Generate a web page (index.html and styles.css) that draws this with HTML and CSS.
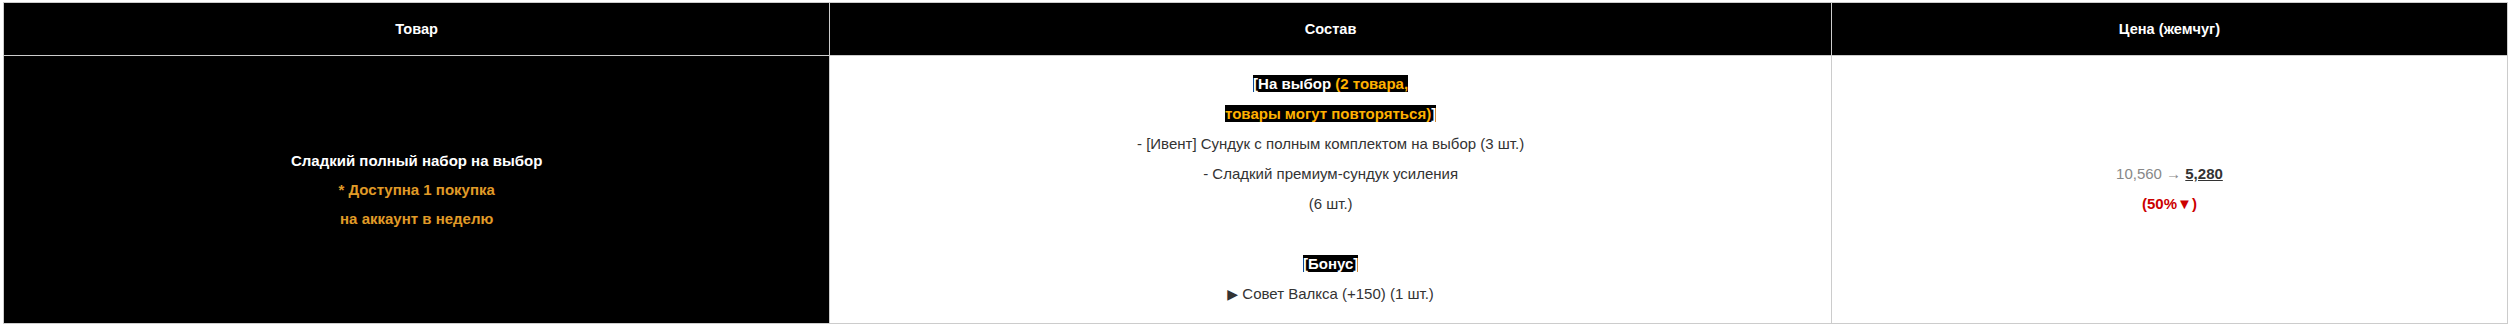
FILE: index.html
```html
<!DOCTYPE html>
<html lang="ru">
<head>
<meta charset="utf-8">
<title>Товар</title>
<link rel="stylesheet" href="styles.css">
</head>
<body>
<div class="wrap">
<table class="shop">
  <colgroup>
    <col class="c-item">
    <col class="c-comp">
    <col class="c-price">
  </colgroup>
  <thead>
    <tr>
      <th>Товар</th>
      <th>Состав</th>
      <th>Цена (жемчуг)</th>
    </tr>
  </thead>
  <tbody>
    <tr>
      <td class="item">Сладкий полный набор на выбор<br><span class="note">* Доступна 1 покупка<br>на аккаунт в неделю</span></td>
      <td class="comp"><span class="tag">[На выбор <span class="hl">(2 товара,<br>товары могут повторяться)</span>]</span><br>- [Ивент] Сундук с полным комплектом на выбор (3 шт.)<br>- Сладкий премиум-сундук усиления<br>(6 шт.)<br><br><span class="tag">[Бонус]</span><br><span class="glyph">▶</span> Совет Валкса (+150) (1 шт.)</td>
      <td class="price"><span class="old">10,560 →</span> <span class="new">5,280</span><br><span class="off">(50%<span class="down">▼</span>)</span></td>
    </tr>
  </tbody>
</table>
</div>
</body>
</html>
```

FILE: styles.css
```css
html, body {
  margin: 0;
  padding: 0;
  background: #ffffff;
}

.wrap {
  padding: 2px 3px 3px 3px;
}

.shop {
  width: 100%;
  border-collapse: collapse;
  border: 1px solid #cccccc;
  font-family: "Liberation Sans", Arial, sans-serif;
  font-size: 15px;
  line-height: 30px;
  color: #333333;
  table-layout: fixed;
}

.c-item { width: 33%; }
.c-comp { width: 40%; }
.c-price { width: 27%; }

.shop th {
  background: #000000;
  color: #ffffff;
  font-weight: bold;
  font-size: 14.6px;
  text-align: center;
  padding: 11px 8px;
  border: 1px solid #cccccc;
}

.shop td {
  text-align: center;
  vertical-align: middle;
  padding: 13px 8px 14px 8px;
  border: 1px solid #cccccc;
}

.shop td.item {
  background: #000000;
  color: #ffffff;
  font-weight: bold;
  line-height: 29px;
}

.note {
  color: #e09b27;
}

.tag {
  background: #000000;
  color: #ffffff;
  font-weight: bold;
}

.hl {
  color: #ffb100;
}

.glyph {
  line-height: 1;
  font-family: "DejaVu Sans", "Liberation Sans", sans-serif;
  font-size: 14px;
}

.down {
  line-height: 1;
  font-family: "Liberation Sans", "DejaVu Sans", sans-serif;
}

.old {
  color: #888888;
}

.new {
  font-weight: bold;
  text-decoration: underline;
  color: #333333;
}

.off {
  color: #cc0000;
  font-weight: bold;
}
```
